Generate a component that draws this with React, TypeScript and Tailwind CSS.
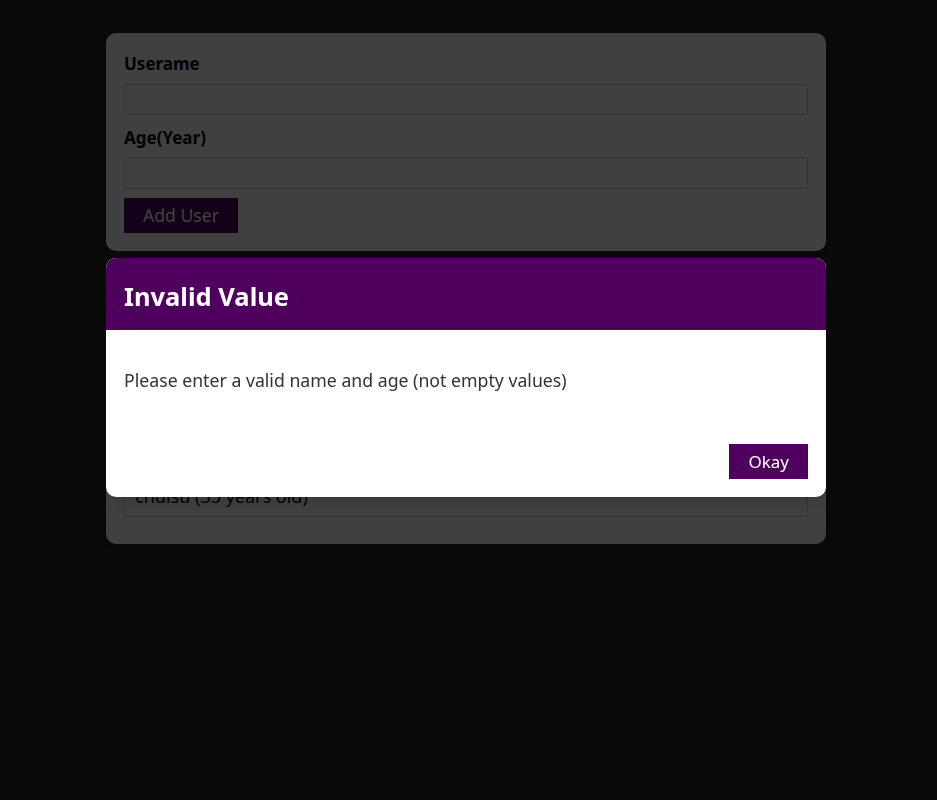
const users = [
  { id: "u1", name: "younghee", age: 28 },
  { id: "u2", name: "minsu", age: 41 },
  { id: "u3", name: "jiyoung", age: 19 },
  { id: "u4", name: "chulsu", age: 33 },
];

const font = { fontFamily: '"Noto Sans", "Noto Sans CJK KR", sans-serif' };

const App = () => {
  return (
    <div className="min-h-screen bg-[#282828] pt-[33px]" style={font}>
      {/* Add user form */}
      <div className="ml-[106px] w-[720px] rounded-[10px] bg-white px-[18px] pt-[20px] pb-[18px] shadow-md">
        <form className="flex flex-col">
          <label className="mb-[9px] text-[17px] font-bold leading-[22px] text-black">Userame</label>
          <input className="h-[31px] w-full border border-[#ccc]" />
          <label className="mt-[12px] mb-[8px] text-[17px] font-bold leading-[22px] text-black">Age(Year)</label>
          <input className="h-[32px] w-full border border-[#ccc]" />
          <div className="mt-[9px]">
            <button
              type="button"
              className="h-[35px] border border-[#4f005f] bg-[#4f005f] px-[18px] text-[17.6px] text-white"
            >
              Add User
            </button>
          </div>
        </form>
      </div>

      {/* Users list */}
      <div className="ml-[106px] mt-[32px] w-[720px] rounded-[10px] bg-white px-[18px] pt-[18px] pb-[27px] shadow-md">
        <ul className="flex flex-col gap-4">
          {users.map((u) => (
            <li key={u.id} className="h-[42px] border border-[#ccc] px-[10px] pt-[8px] text-[18px] leading-[24px] text-black">
              {u.name} ({u.age} years old)
            </li>
          ))}
        </ul>
      </div>

      {/* backdrop */}
      <div className="fixed inset-0 bg-black/75" />

      {/* modal */}
      <div className="fixed left-[106px] top-[258px] w-[720px] overflow-hidden rounded-[10px] bg-white shadow-lg">
        <header className="flex h-[72px] items-center bg-[#4f005f] px-[18px] pt-[4px]">
          <h2 className="text-[25.5px] font-bold text-white">Invalid Value</h2>
        </header>
        <div className="px-[18px] pt-[38px] pb-[52px]">
          <p className="text-[17.7px] leading-[24px] text-[#333]">Please enter a valid name and age (not empty values)</p>
        </div>
        <footer className="flex justify-end px-[18px] pb-[18px]">
          <button
            type="button"
            className="h-[35px] border border-[#4f005f] bg-[#4f005f] px-[18px] text-[17px] text-white"
          >
            Okay
          </button>
        </footer>
      </div>
    </div>
  );
};

export default App;
